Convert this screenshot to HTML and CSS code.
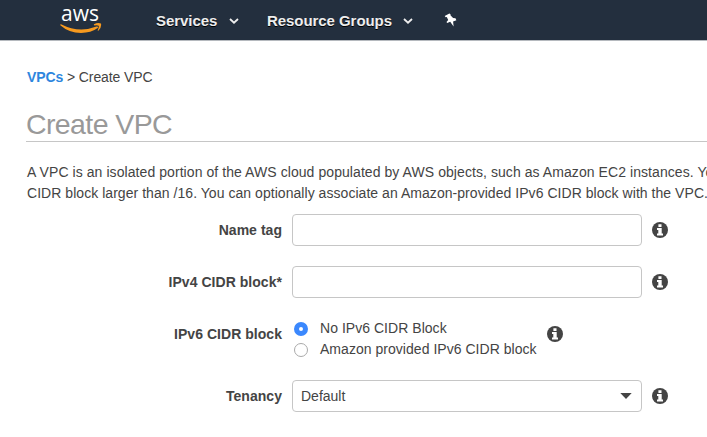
FILE: index.html
```html
<!DOCTYPE html>
<html lang="en">
<head>
<meta charset="utf-8">
<title>Create VPC</title>
<link rel="stylesheet" href="styles.css">
</head>
<body>
<svg width="0" height="0" class="defs">
  <symbol id="info" viewBox="0 0 16 16">
    <circle cx="8" cy="8" r="8" fill="#444"/>
    <path d="M6.4 2.3h3.1v2.6H6.4zM5 6h4.7v5.4H11v2.1H5v-2.1h1.3V8.1H5z" fill="#fff"/>
  </symbol>
  <symbol id="chevron" viewBox="0 0 10 6">
    <path d="M1 1l4 3.7L9 1" fill="none" stroke="#eee" stroke-width="1.8"/>
  </symbol>
</svg>
<header class="nav">
  <div class="logo">
    <span class="logo-text">aws</span>
    <svg class="smile" width="42" height="11" viewBox="0 0 42 11">
      <path d="M1 1.3Q19 10.5 36.5 3.6Q39 3.1 37.7 5Q31 9.9 21 9.9Q9 9.9.3 2.2Q0 1.2 1 1.3Z" fill="#f79a1f"/>
      <path d="M34 1.3Q37.5-.6 41 .5Q41.8 4.5 38.4 7.8Q37.5 8 37.8 7.1Q39.2 3.6 38.7 2.8Q37.8 2 34.4 2.4Q33.6 2 34 1.3Z" fill="#f79a1f"/>
    </svg>
  </div>
  <span class="nav-item services">Services</span>
  <svg class="chev" width="10" height="6"><use href="#chevron"/></svg>
  <span class="nav-item groups">Resource Groups</span>
  <svg class="chev" width="10" height="6"><use href="#chevron"/></svg>
  <svg class="pin" width="13" height="15" viewBox="0 0 13 15">
    <path d="M5.4.5L.7 3.1L1.7 4.2L2.8 4.1L4.2 6.9L2.5 8.9L3.2 10.1L6.2 8.8L9.6 13.6L9.1 8.6L12.4 7.2L11.5 5.2L9.1 5.1L6.6 2.5L6.5 1.3Z" fill="#fff"/>
  </svg>
</header>
<main>
  <nav class="crumbs"><a class="link">VPCs</a> &gt; Create VPC</nav>
  <h1>Create VPC</h1>
  <div class="intro">
    <div class="line1">A VPC is an isolated portion of the AWS cloud populated by AWS objects, such as Amazon EC2 instances. Yo</div>
    <div class="line2">CIDR block larger than /16. You can optionally associate an Amazon-provided IPv6 CIDR block with the VPC.</div>
  </div>
  <form class="form">
    <div class="row">
      <label>Name tag</label><div class="field"></div>
      <svg class="info" width="16" height="16"><use href="#info"/></svg>
    </div>
    <div class="row">
      <label>IPv4 CIDR block*</label><div class="field"></div>
      <svg class="info" width="16" height="16"><use href="#info"/></svg>
    </div>
    <div class="row">
      <label>IPv6 CIDR block</label>
      <div class="radios">
        <div class="option"><span class="radio checked"></span><span class="opt1">No IPv6 CIDR Block</span></div>
        <div class="option"><span class="radio"></span><span class="opt2">Amazon provided IPv6 CIDR block</span></div>
      </div>
      <svg class="info" width="16" height="16"><use href="#info"/></svg>
    </div>
    <div class="row tenancy">
      <label>Tenancy</label>
      <div class="field select"><span>Default</span>
        <svg width="12" height="6" viewBox="0 0 12 6"><path d="M.3 0h11.4L6 6z" fill="#444"/></svg>
      </div>
      <svg class="info" width="16" height="16"><use href="#info"/></svg>
    </div>
  </form>
</main>
</body>
</html>
```
FILE: styles.css
```css
* { box-sizing: border-box; }
body {
  margin: 0;
  height: 437px;
  overflow: hidden;
  background: #fff;
  color: #444;
  font: 14px/21px "Liberation Sans", Arial, sans-serif;
}
svg { display: block; flex: none; }
.defs { position: absolute; }
.nav {
  display: flex;
  align-items: center;
  height: 41px;
  padding-left: 60px;
  background: #232f3e;
  border-bottom: 1px solid #b5b9be;
}
.logo { width: 42px; height: 40px; padding-top: 4px; }
.logo-text {
  display: block;
  height: 19px;
  padding-left: 1px;
  color: #fff;
  font: 500 21px/19px "Open Sans", sans-serif;
}
.nav-item {
  color: #eee;
  font-size: 15px;
  font-weight: bold;
  letter-spacing: -0.06px;
  text-shadow: 0 1px 0 #000;
  white-space: nowrap;
}
.services { width: 73px; margin-left: 54px; }
.groups { width: 136px; margin-left: 28px; }
.pin { margin-left: 31px; }
.chev { margin-top: 2px; }
main { padding: 26px 0 0 27px; }
.crumbs { height: 21px; letter-spacing: -0.1px; }
.link { color: #2e86de; font-weight: bold; }
h1 {
  height: 42px;
  margin: 12px 0 0 -1px;
  border-bottom: 1px solid #c6c6c6;
  color: #999;
  font-size: 28.5px;
  font-weight: normal;
  letter-spacing: -0.6px;
  line-height: 48px;
}
h1, .intro { white-space: nowrap; }
.intro { padding-top: 20px; }
.line1 { letter-spacing: 0.07px; }
.line2 { letter-spacing: 0.045px; }
.form { padding-top: 10px; }
.row { display: flex; align-items: center; height: 32px; margin-bottom: 20px; }
label { width: 255px; margin-right: 10px; text-align: right; font-weight: bold; letter-spacing: 0.04px; }
.field {
  width: 350px;
  height: 32px;
  border: 1px solid #c6c6c6;
  border-radius: 4px;
}
.info { margin-left: 10px; }
.radios { display: grid; grid-template-rows: 21px 21px; margin-top: 11px; letter-spacing: 0.035px; }
.option { display: flex; align-items: center; white-space: nowrap; }
.option span:last-child { margin-top: -2px; }
.radio {
  width: 14px;
  height: 14px;
  margin: 0 12px 0 2px;
  border: 1px solid #aaa;
  border-radius: 50%;
}
.checked { border: 5px solid #3b88fd; }
.tenancy { margin-top: 30px; }
.select { display: flex; align-items: center; justify-content: space-between; padding: 0 9px 0 8px; }
```
